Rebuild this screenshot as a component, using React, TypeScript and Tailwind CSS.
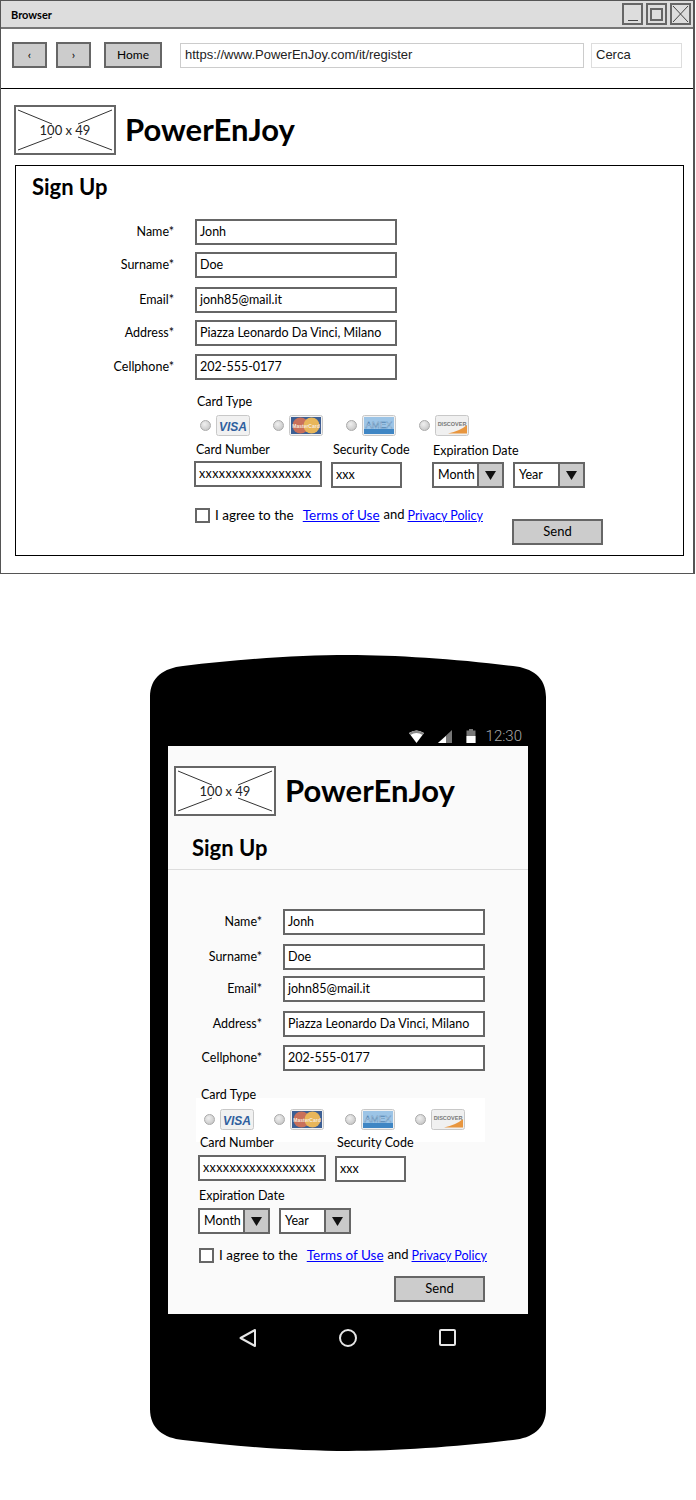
import React from 'react';

const sketch = "font-['Lato','Noto_Sans',sans-serif]";

function Logo() {
    return (
        <div className="relative w-[102px] h-[50px] shrink-0 border-2 border-[#666] bg-white">
            <svg className="absolute inset-0 w-full h-full" viewBox="0 0 98 46" fill="none" stroke="#333" strokeWidth="1">
                <path d="M2 3 L36 17 M96 3 L62 17 M2 43 L36 30 M96 43 L62 30" />
            </svg>
            <div className="absolute inset-0 pt-[2px] flex items-center justify-center text-[13px] text-[#222] font-['Lato',sans-serif]">100 x 49</div>
        </div>
    );
}

function TextBox({ value, className }: { value: string; className: string }) {
    return (
        <div className={`h-[26px] flex items-center border-2 border-[#666] bg-white pl-[3px] text-[12.5px] text-black whitespace-nowrap ${className}`}>
            {value}
        </div>
    );
}

function FormRow({ label, value, labelWidth, className }: { label: string; value: string; labelWidth: string; className: string }) {
    return (
        <div className={`flex items-center ${className}`}>
            <div className={`text-right text-[12.5px] text-black ${labelWidth}`}>{label}</div>
            <TextBox value={value} className="ml-[21px] w-[202px]" />
        </div>
    );
}

function Radio() {
    return <div className="w-[11px] h-[11px] rounded-full shrink-0 border border-[#aaa] bg-[radial-gradient(circle_at_40%_35%,#f0f0f0,#bdbdbd)]" />;
}

function Visa() {
    return (
        <svg width="34" height="21" viewBox="0 0 34 21">
            <rect x="0.5" y="0.5" width="33" height="20" rx="2" fill="#f1f1f1" stroke="#c8c8c8" />
            <text x="17" y="15.5" textAnchor="middle" fontFamily="Liberation Sans" fontWeight="700" fontStyle="italic" fontSize="12" fill="#2f5f9e">VISA</text>
        </svg>
    );
}

function MasterCard() {
    return (
        <svg width="34" height="21" viewBox="0 0 34 21">
            <rect x="0.5" y="0.5" width="33" height="20" rx="2" fill="#f1f1f1" stroke="#c8c8c8" />
            <rect x="2" y="2" width="30" height="17" fill="#3c5f94" />
            <circle cx="11.5" cy="10.5" r="8" fill="#c9705a" />
            <circle cx="22.5" cy="10.5" r="8" fill="#e8b65a" />
            <text x="17" y="12.5" textAnchor="middle" fontFamily="Liberation Sans" fontWeight="700" fontSize="5" fill="#f5eadf">MasterCard</text>
        </svg>
    );
}

function Amex() {
    return (
        <svg width="34" height="21" viewBox="0 0 34 21">
            <rect x="0.5" y="0.5" width="33" height="20" rx="2" fill="#f1f1f1" stroke="#c8c8c8" />
            <rect x="2" y="2" width="30" height="17" fill="#9cc4e6" />
            <rect x="2" y="14" width="30" height="5" fill="#3f86c4" />
            <text x="17" y="12.5" textAnchor="middle" fontFamily="Liberation Sans" fontWeight="400" fontSize="9.5" fill="#eef6fc" stroke="#4a7fb0" strokeWidth="0.4">AMEX</text>
        </svg>
    );
}

function Discover() {
    return (
        <svg width="34" height="21" viewBox="0 0 34 21">
            <rect x="0.5" y="0.5" width="33" height="20" rx="2" fill="#f0f0f0" stroke="#c8c8c8" />
            <path d="M13 18.5 Q25 16 32 10 L32 18.5 Z" fill="#e8963f" />
            <text x="17" y="10.5" textAnchor="middle" fontFamily="Liberation Sans" fontWeight="700" fontSize="5.5" fill="#777">DISCOVER</text>
        </svg>
    );
}

function CardTypes({ className }: { className: string }) {
    const cards = [<Visa />, <MasterCard />, <Amex />, <Discover />];
    return (
        <div className={`flex h-[21px] ${className}`}>
            {cards.map((card, index) => (
                <div key={index} className="flex items-center gap-[5px] w-[73px]">
                    <Radio />
                    {card}
                </div>
            ))}
        </div>
    );
}

function Select({ value }: { value: string }) {
    return (
        <div className="flex h-[26px] w-[72px] border-2 border-[#666] bg-white">
            <div className="flex-1 flex items-center pl-[4px] text-[12.5px] text-black">{value}</div>
            <div className="w-[25px] border-l-2 border-[#666] bg-[#c9c9c9] flex items-center justify-center">
                <svg width="11" height="9" viewBox="0 0 11 9"><path d="M0 0 H11 L5.5 9 Z" fill="#111" /></svg>
            </div>
        </div>
    );
}

function Agree() {
    return (
        <div className="flex items-center h-[18px] text-black whitespace-nowrap">
            <div className="w-[15px] h-[15px] border-2 border-[#666] bg-white shrink-0" />
            <span className="ml-[5px] text-[13.5px]">I agree to the</span>
            <a className="ml-[9px] text-[13.5px] text-[#0000ff] underline">Terms of Use</a>
            <span className="ml-[4px] text-[13px]">and</span>
            <a className="ml-[3px] mt-[2px] text-[12.5px] text-[#0000ff] underline">Privacy Policy</a>
        </div>
    );
}

function SendButton({ className }: { className: string }) {
    return (
        <div className={`w-[91px] h-[26px] flex items-center justify-center border-2 border-[#666] bg-[#cccccc] text-[13px] text-black ${className}`}>
            Send
        </div>
    );
}

function NavButton({ label, width }: { label: string; width: string }) {
    return (
        <div className={`h-[26px] flex items-center justify-center border-2 border-[#666] bg-[#cccccc] text-[12px] text-black ${width}`}>
            {label}
        </div>
    );
}

function BrowserWindow() {
    return (
        <div className="w-[695px] h-[574px] border border-[#555] border-r-2 bg-white">
            {/* Title bar */}
            <div className="h-[28px] flex items-center bg-[#dddddd] border-b-2 border-[#777]">
                <div className="ml-[10px] pt-[2px] text-[11px] font-bold text-black">Browser</div>
                <div className="ml-auto mr-[2px] flex gap-[3px]">
                    <div className="w-[21px] h-[22px] border-2 border-[#666] flex items-end justify-center pb-[2px]">
                        <div className="w-[10px] h-[1px] bg-[#444]" />
                    </div>
                    <div className="w-[21px] h-[22px] border-2 border-[#666] flex items-center justify-center">
                        <div className="w-[13px] h-[13px] border-2 border-[#666]" />
                    </div>
                    <div className="w-[21px] h-[22px] border-2 border-[#666] flex items-center justify-center">
                        <svg width="17" height="18" viewBox="0 0 17 18" stroke="#444" strokeWidth="1"><path d="M1 1 L16 17 M16 1 L1 17" /></svg>
                    </div>
                </div>
            </div>

            {/* Toolbar */}
            <div className="h-[60px] flex items-center border-b border-black pl-[11px] pb-[7px]">
                <NavButton label="‹" width="w-[35px]" />
                <div className="ml-[9px]"><NavButton label="›" width="w-[35px]" /></div>
                <div className="ml-[13px]"><NavButton label="Home" width="w-[58px]" /></div>
                <div className="ml-[18px] w-[404px] h-[25px] flex items-center border border-[#ccc] pl-[4px] text-[13px] text-[#222] font-['Liberation_Sans',sans-serif]">
                    https://www.PowerEnJoy.com/it/register
                </div>
                <div className="ml-[7px] w-[91px] h-[25px] flex items-center border border-[#ddd] pl-[4px] text-[13px] text-[#222] font-['Liberation_Sans',sans-serif]">
                    Cerca
                </div>
            </div>

            {/* Header */}
            <div className="flex items-center pt-[16px] pl-[13px]">
                <Logo />
                <div className="ml-[9px] mb-[1px] text-[31px] leading-[47px] font-bold text-black">PowerEnJoy</div>
            </div>

            {/* Form panel */}
            <div className="ml-[14px] mt-[10px] w-[669px] h-[391px] border border-black">
                <div className="pl-[16px] pt-[7px] h-[29px] text-[22px] leading-[28px] font-bold text-black">Sign Up</div>
                <FormRow label="Name*" value="Jonh" labelWidth="w-[158px]" className="mt-[24px]" />
                <FormRow label="Surname*" value="Doe" labelWidth="w-[158px]" className="mt-[7px]" />
                <FormRow label="Email*" value="jonh85@mail.it" labelWidth="w-[158px]" className="mt-[9px]" />
                <FormRow label="Address*" value="Piazza Leonardo Da Vinci, Milano" labelWidth="w-[158px]" className="mt-[7px]" />
                <FormRow label="Cellphone*" value="202-555-0177" labelWidth="w-[158px]" className="mt-[8px]" />

                <div className="ml-[181px] mt-[13px] h-[18px] text-[12.5px] leading-[18px]">Card Type</div>
                <CardTypes className="ml-[184px] mt-[4px]" />

                <div className="flex ml-[178px] mt-[5px]">
                    <div className="w-[128px]">
                        <div className="ml-[2px] h-[18px] text-[12.5px] leading-[18px]">Card Number</div>
                        <TextBox value="xxxxxxxxxxxxxxxxx" className="mt-[2px] w-[128px] tracking-[0.4px]" />
                    </div>
                    <div className="ml-[9px] w-[71px]">
                        <div className="ml-[2px] h-[18px] text-[12.5px] leading-[18px] whitespace-nowrap">Security Code</div>
                        <TextBox value="xxx" className="mt-[3px] w-[71px]" />
                    </div>
                    <div className="ml-[30px]">
                        <div className="ml-[1px] mt-[1px] h-[18px] text-[12.5px] leading-[18px]">Expiration Date</div>
                        <div className="flex gap-[9px] mt-[2px]">
                            <Select value="Month" />
                            <Select value="Year" />
                        </div>
                    </div>
                </div>

                <div className="flex w-[587px] pl-[179px] mt-[18px]">
                    <Agree />
                    <SendButton className="ml-auto mt-[13px]" />
                </div>
            </div>
        </div>
    );
}

function PhoneFrame() {
    return (
        <svg className="absolute inset-0" width="396" height="796" viewBox="0 0 396 796">
            <path d="M0 42 C0 22 14 13 33 11 C90 4 150 0 198 0 C246 0 306 4 363 11 C382 13 396 22 396 42 L396 754 C396 774 382 783 363 785 C306 792 246 796 198 796 C150 796 90 792 33 785 C14 783 0 774 0 754 Z" fill="#000" />
        </svg>
    );
}

function StatusBar() {
    return (
        <div className="relative h-[20px] flex items-center justify-end pr-[24px] gap-[14px]">
            <svg width="15" height="13" viewBox="0 0 15 13">
                <path d="M0 3 Q7.5 -2 15 3 L7.5 13 Z" fill="#fff" />
                <path d="M0 3 Q7.5 -2 15 3 L13.6 5 Q7.5 1 1.4 5 Z" fill="#8a8a8a" />
            </svg>
            <svg width="14" height="13" viewBox="0 0 14 13">
                <path d="M14 0 V13 H0 Z" fill="#777" />
                <path d="M8 6 V13 H0 Z" fill="#fff" />
            </svg>
            <svg width="10" height="14" viewBox="0 0 10 14">
                <path d="M3 0 H7 V1.5 H9.5 V14 H0.5 V1.5 H3 Z" fill="#777" />
                <path d="M0.5 7 H9.5 V14 H0.5 Z" fill="#fff" />
            </svg>
            <div className="ml-[-4px] text-[15px] font-light text-[#aaa] font-['Roboto',sans-serif]">12:30</div>
        </div>
    );
}

function PhoneScreen() {
    return (
        <div className="relative mx-[18px] w-[360px] h-[568px] bg-[#fafafa]">
            <div className="flex items-center pt-[20px] pl-[6px]">
                <Logo />
                <div className="ml-[9px] mb-[1px] text-[31px] leading-[47px] font-bold text-black">PowerEnJoy</div>
            </div>

            <div className="h-[54px] pl-[24px] pt-[17px] border-b border-[#dddddd] text-[22px] leading-[30px] font-bold text-black">Sign Up</div>

            <FormRow label="Name*" value="Jonh" labelWidth="w-[94px]" className="mt-[39px]" />
            <FormRow label="Surname*" value="Doe" labelWidth="w-[94px]" className="mt-[9px]" />
            <FormRow label="Email*" value="john85@mail.it" labelWidth="w-[94px]" className="mt-[6px]" />
            <FormRow label="Address*" value="Piazza Leonardo Da Vinci, Milano" labelWidth="w-[94px]" className="mt-[9px]" />
            <FormRow label="Cellphone*" value="202-555-0177" labelWidth="w-[94px]" className="mt-[8px]" />

            <div className="ml-[33px] mt-[15px] h-[18px] text-[12.5px] leading-[18px]">Card Type</div>

            {/* White strip behind the card choices */}
            <div className="ml-[28px] -mt-[6px] w-[289px] h-[44px] bg-white pt-[11px] pl-[8px]">
                <CardTypes className="" />
            </div>

            <div className="flex ml-[30px] -mt-[8px]">
                <div className="w-[128px]">
                    <div className="ml-[2px] h-[18px] text-[12.5px] leading-[18px]">Card Number</div>
                    <TextBox value="xxxxxxxxxxxxxxxxx" className="mt-[3px] w-[128px] tracking-[0.4px]" />
                </div>
                <div className="ml-[9px] w-[71px]">
                    <div className="ml-[2px] h-[18px] text-[12.5px] leading-[18px] whitespace-nowrap">Security Code</div>
                    <TextBox value="xxx" className="mt-[4px] w-[71px]" />
                </div>
            </div>

            <div className="ml-[31px] mt-[5px] h-[18px] text-[12.5px] leading-[18px]">Expiration Date</div>
            <div className="flex gap-[9px] ml-[30px] mt-[3px]">
                <Select value="Month" />
                <Select value="Year" />
            </div>

            <div className="ml-[31px] mt-[12px]"><Agree /></div>
            <div className="flex justify-end w-[317px] mt-[12px]">
                <SendButton className="" />
            </div>
        </div>
    );
}

function NavKeys() {
    return (
        <div className="relative flex items-center justify-center h-[48px]">
            <svg width="232" height="22" viewBox="0 0 232 22" fill="none" stroke="#e6e6e6" strokeWidth="2" strokeLinejoin="round">
                <path d="M23 3 V19 L8.5 11 Z" />
                <circle cx="116" cy="11" r="8" />
                <rect x="208" y="3" width="15" height="15" rx="1" />
            </svg>
        </div>
    );
}

export default function App() {
    return (
        <div className={`w-[696px] h-[1500px] bg-white text-black overflow-hidden ${sketch}`}>
            <BrowserWindow />
            <div className="relative ml-[150px] mt-[81px] w-[396px] h-[796px] pt-[71px]">
                <PhoneFrame />
                <StatusBar />
                <PhoneScreen />
                <NavKeys />
            </div>
        </div>
    );
}
